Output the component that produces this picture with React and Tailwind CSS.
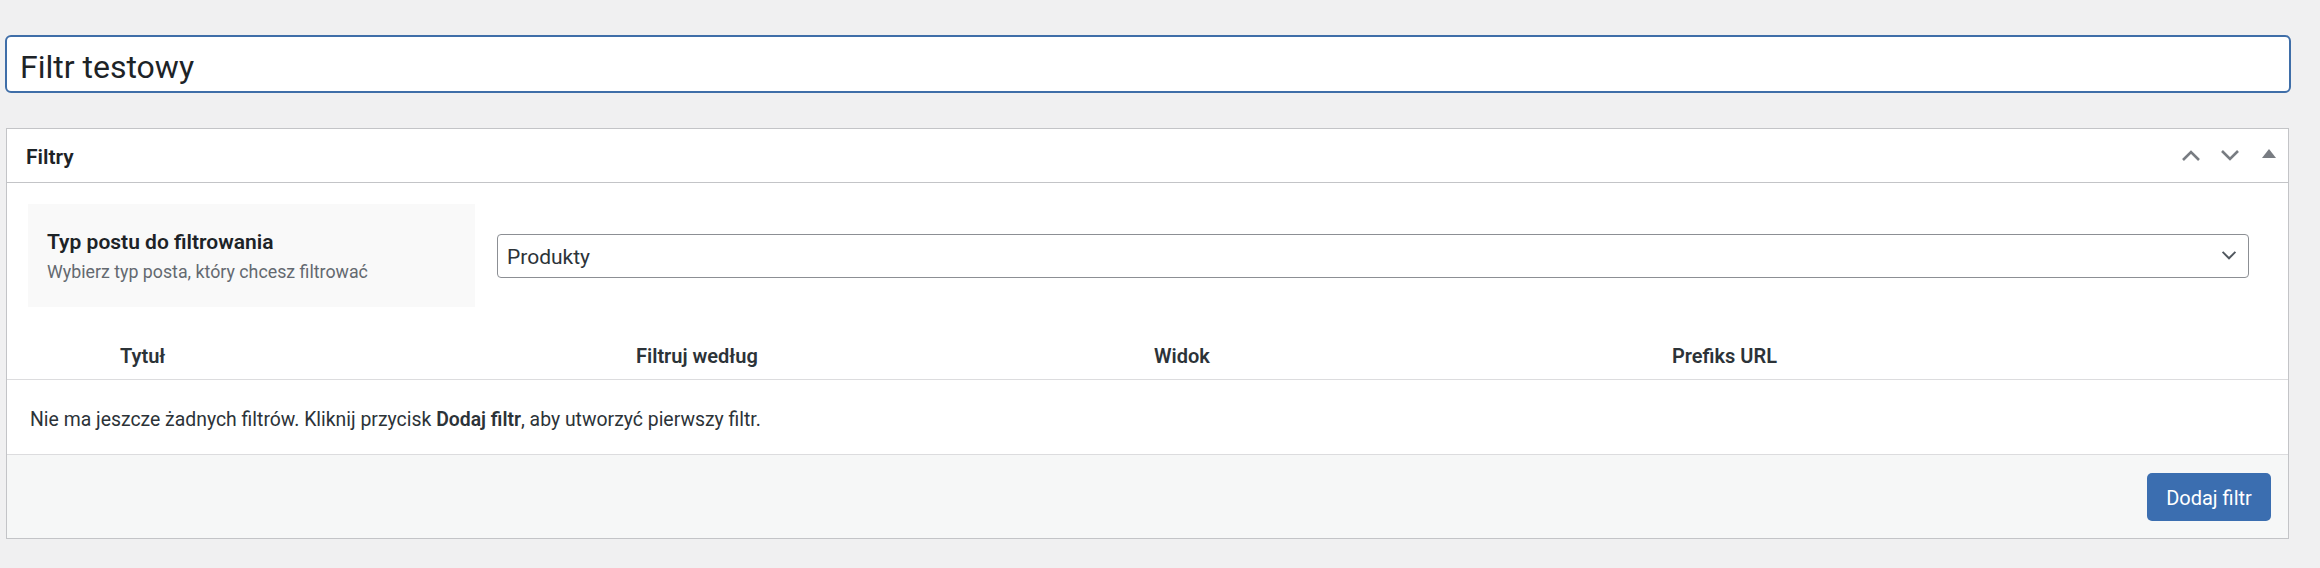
import React from "react";

function ChevronUp() {
  return (
    <svg width="20" height="13" viewBox="0 0 20 13" fill="none">
      <path d="M2 11 L10 3 L18 11" stroke="#787c82" strokeWidth="2.6" />
    </svg>
  );
}
function ChevronDown({ color = "#787c82", w = 20, h = 13, sw = 2.6 }) {
  return (
    <svg width={w} height={h} viewBox="0 0 20 13" fill="none">
      <path d="M2 2 L10 10 L18 2" stroke={color} strokeWidth={sw} />
    </svg>
  );
}
function Triangle() {
  return (
    <svg width="14" height="9" viewBox="0 0 14 9">
      <path d="M7 0 L14 9 L0 9 Z" fill="#787c82" />
    </svg>
  );
}

export default function App() {
  return (
    <div className="min-h-[568px] w-[2320px] bg-[#f0f0f1] pt-[35px] pl-[5px] pr-[29px] pb-[29px] font-['Roboto',sans-serif] text-[#1d2327]">
      <input
        defaultValue="Filtr testowy"
        className="block h-[58px] w-[2286px] rounded-[6px] border-2 border-[#3f6ea8] bg-white pl-[13px] pt-[6px] text-[32px] text-[#1d2327] outline-none font-['Roboto',sans-serif]"
      />

      <div className="ml-[1px] mr-[2px] mt-[35px] border border-[#c3c4c7] bg-white">
        {/* header */}
        <div className="flex h-[54px] items-center justify-between border-b border-[#c3c4c7] pl-[19px]">
          <h2 className="pt-[4px] text-[21px] font-semibold text-[#1d2327]">Filtry</h2>
          <div className="flex items-center">
            <div className="flex h-[53px] w-[39px] items-center justify-center"><ChevronUp /></div>
            <div className="flex h-[53px] w-[39px] items-center justify-center"><ChevronDown /></div>
            <div className="flex h-[53px] w-[39px] items-center justify-center pb-[4px]"><Triangle /></div>
          </div>
        </div>

        {/* post type row */}
        <div className="flex items-center gap-[22px] pl-[21px] pr-[39px] pt-[21px]">
          <div className="flex h-[103px] w-[447px] shrink-0 flex-col justify-center bg-[#f9f9f9] pl-[19px]">
            <div className="text-[21px] font-semibold leading-[28px] text-[#1d2327]">Typ postu do filtrowania</div>
            <div className="mt-[4px] text-[17.8px] leading-[24px] text-[#646970]">Wybierz typ posta, który chcesz filtrować</div>
          </div>
          <div className="flex h-[44px] flex-1 items-center justify-between rounded-[4px] border border-[#8c8f94] bg-white pl-[9px] pr-[11px]">
            <span className="pt-[5px] text-[21px] text-[#2c3338]">Produkty</span>
            <ChevronDown color="#50575e" w={16} h={11} sw={2.4} />
          </div>
        </div>

        {/* table */}
        <div className="mt-[23px]">
          <div className="flex h-[50px] items-center border-b border-[#dcdcde] pl-[113px] pt-[3px] text-[20px] font-semibold text-[#2c3338]">
            <div className="w-[516px]">Tytuł</div>
            <div className="w-[518px]">Filtruj według</div>
            <div className="w-[518px]">Widok</div>
            <div className="flex-1">Prefiks URL</div>
          </div>
          <div className="flex h-[74px] items-center pl-[23px] pt-[6px] text-[19.4px] text-[#2c3338]">
            <p>
              Nie ma jeszcze żadnych filtrów. Kliknij przycisk <strong className="font-semibold">Dodaj filtr</strong>, aby utworzyć pierwszy filtr.
            </p>
          </div>
        </div>

        {/* footer */}
        <div className="flex h-[84px] items-center justify-end border-t border-[#dcdcde] bg-[#f6f7f7] pr-[17px]">
          <button className="h-[48px] w-[124px] rounded-[5px] bg-[#3b6eb0] pt-[2px] text-[20px] text-white">Dodaj filtr</button>
        </div>
      </div>
    </div>
  );
}
